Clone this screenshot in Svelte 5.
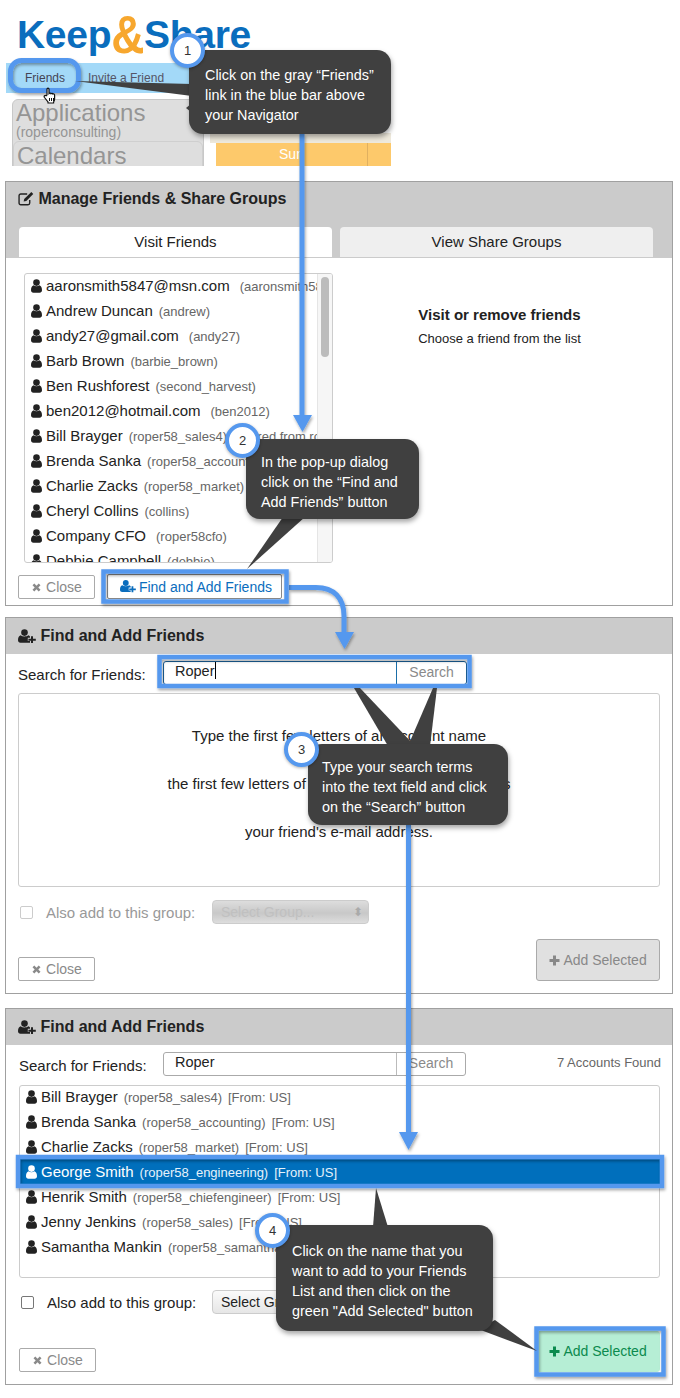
<script>
  const friends = [
    ['aaronsmith5847@msn.com', '(aaronsmith5847)', 10],
    ['Andrew Duncan', '(andrew)', 6],
    ['andy27@gmail.com', '(andy27)', 10],
    ['Barb Brown', '(barbie_brown)', 6],
    ['Ben Rushforest', '(second_harvest)', 6],
    ['ben2012@hotmail.com', '(ben2012)', 10],
    ['Bill Brayger', '(roper58_sales4) [Shared from roper58]', 6],
    ['Brenda Sanka', '(roper58_accounting)', 6],
    ['Charlie Zacks', '(roper58_market)', 6],
    ['Cheryl Collins', '(collins)', 6],
    ['Company CFO', '(roper58cfo)', 10],
    ['Debbie Campbell', '(debbie)', 6]
  ];
  const results = [
    ['Bill Brayger', '(roper58_sales4)'],
    ['Brenda Sanka', '(roper58_accounting)'],
    ['Charlie Zacks', '(roper58_market)'],
    ['George Smith', '(roper58_engineering)'],
    ['Henrik Smith', '(roper58_chiefengineer)'],
    ['Jenny Jenkins', '(roper58_sales)'],
    ['Samantha Mankin', '(roper58_samantha)']
  ];
  const callouts = [
    { n: 1, cls: 'c1', lines: ['Click on the gray “Friends”', 'link in the blue bar above', 'your Navigator'] },
    { n: 2, cls: 'c2', lines: ['In the pop-up dialog', 'click on the “Find and', 'Add Friends” button'] },
    { n: 3, cls: 'c3', lines: ['Type your search terms', 'into the text field and click', 'on the “Search” button'] },
    { n: 4, cls: 'c4', lines: ['Click on the name that you', 'want to add to your Friends', 'List and then click on the', 'green "Add Selected" button'] }
  ];
</script>

{#snippet user()}
  <svg class="ico user" viewBox="0 0 11 14"><circle cx="5.5" cy="3.6" r="3.3" fill="currentColor"/><path d="M0 11.2C0 8.6.8 6.8 2.6 6.2c.8.7 1.8 1.1 2.9 1.1s2.1-.4 2.9-1.1c1.8.6 2.6 2.4 2.6 5 0 1.6-1 2.5-2.4 2.5H2.4C1 13.7 0 12.8 0 11.2z" fill="currentColor"/></svg>
{/snippet}
{#snippet userPlus()}
  <svg class="ico plus-user" viewBox="0 0 18 14"><circle cx="6.5" cy="3.6" r="3.3" fill="currentColor"/><path d="M0 11.2C0 8.6.8 6.8 2.6 6.2c1 .8 2.3 1.2 3.9 1.2s2.900-.4 3.900-1.200c.7.200 1.200.7 1.600 1.200v1.300h-2.200v3.400H12V13.700H2.400C1 13.700 0 12.800 0 11.200z" fill="currentColor"/><path d="M13 7.200h2v2.600h2.800v2H15v2.200h-2v-2.200h-2.600v-2H13z" fill="currentColor"/></svg>
{/snippet}
{#snippet cross()}
  <svg class="ico x" viewBox="0 0 11 11"><path d="M1.500 3.300 3.300 1.500 5.500 3.700 7.700 1.500 9.500 3.300 7.300 5.500 9.500 7.700 7.700 9.500 5.500 7.300 3.300 9.500 1.500 7.700 3.700 5.500z" fill="currentColor"/></svg>
{/snippet}
{#snippet plus()}
  <svg class="ico x" viewBox="0 0 11 11"><path d="M4 .5h3V4h3.500v3H7v3.500H4V7H.5V4H4z" fill="currentColor"/></svg>
{/snippet}

<div class="page">
  <header class="top">
    <div class="logo">Keep<span>&amp;</span>Share</div>
    <div class="bluebar"><span class="tab-friends">Friends</span><span class="invite">Invite a Friend</span></div>
    <div class="nav">
      <div class="apps">
        <div class="apps-a">
          <div class="big">Applications</div>
          <div class="small">(roperconsulting)</div>
        </div>
        <div class="apps-b"><div class="big">Calendars</div></div>
      </div>
      <div class="cal">
        <div class="cal-beige"></div>
        <div class="cal-head"><span class="sun">Sun</span><span class="mon"></span></div>
      </div>
    </div>
  </header>

  <section class="panel p1">
    <div class="phead tall">
      <h2>
        <svg class="ico pencil" viewBox="0 0 15 14"><path d="M11 8.500v2.700c0 .9-.7 1.600-1.600 1.600H2.600c-.9 0-1.600-.7-1.600-1.600V4.400c0-.9.7-1.600 1.600-1.600h6" fill="none" stroke="currentColor" stroke-width="1.300"/><path d="M12.500 1 14.300 2.800 7.800 9.300 5.300 9.800 5.800 7.400z" fill="currentColor"/></svg>
        Manage Friends &amp; Share Groups
      </h2>
      <div class="tabs">
        <div class="tab on">Visit Friends</div>
        <div class="tab">View Share Groups</div>
      </div>
    </div>
    <div class="p1-body">
      <div class="flist">
        <div class="frows">
          {#each friends as f}
            <div class="frow">{@render user()}<span class="nm">{f[0]}</span><span class="sub" style:margin-left="{f[2]}px">{f[1]}</span></div>
          {/each}
        </div>
        <div class="track"><div class="thumb"></div></div>
      </div>
      <div class="visit">
        <strong>Visit or remove friends</strong>
        <span>Choose a friend from the list</span>
      </div>
    </div>
    <div class="p1-foot">
      <button class="btn close">{@render cross()} Close</button>
      <button class="btn find">{@render userPlus()} Find and Add Friends</button>
    </div>
  </section>

  <section class="panel p2">
    <div class="phead"><h2>{@render userPlus()} Find and Add Friends</h2></div>
    <div class="srow">
      <span class="slabel">Search for Friends:</span>
      <div class="sgroup focus">
        <div class="sinput">Roper<i class="caret"></i></div>
        <div class="sbtn">Search</div>
      </div>
    </div>
    <div class="hint">
      <p>Type the first few letters of an account name</p>
      <p>the first few letters of your friend's first &amp; last names</p>
      <p>your friend's e-mail address.</p>
    </div>
    <div class="grouprow faded">
      <span class="cb"></span><span class="glabel">Also add to this group:</span>
      <div class="gsel disabled"><span>Select Group...</span><span class="updown">⬍</span></div>
    </div>
    <div class="actions low">
      <button class="btn close">{@render cross()} Close</button>
      <button class="btn add">{@render plus()} Add Selected</button>
    </div>
  </section>

  <section class="panel p3">
    <div class="phead"><h2>{@render userPlus()} Find and Add Friends</h2></div>
    <div class="srow">
      <span class="slabel">Search for Friends:</span>
      <div class="sgroup">
        <div class="sinput">Roper</div>
        <div class="sbtn">Search</div>
      </div>
      <span class="found">7 Accounts Found</span>
    </div>
    <div class="rlist">
      {#each results as r, i}
        <div class="rrow" class:sel={i === 3}>{@render user()}<span class="nm">{r[0]}</span><span class="sub r-sub">{r[1]}</span><span class="sub r-sub">[From: US]</span></div>
      {/each}
    </div>
    <div class="grouprow">
      <span class="cb"></span><span class="glabel">Also add to this group:</span>
      <div class="gsel"><span>Select Group...</span></div>
    </div>
    <div class="actions">
      <button class="btn close">{@render cross()} Close</button>
      <button class="btn add green">{@render plus()} Add Selected</button>
    </div>
  </section>

  <!-- annotation layer drawn over the screenshots -->
  <svg class="arrows" viewBox="0 0 680 1398" width="680" height="1398">
    <defs>
      <filter id="sh" x="-20%" y="-20%" width="140%" height="140%"><feDropShadow dx="1" dy="2" stdDeviation="1.500" flood-color="#000" flood-opacity=".35"/></filter>
    </defs>
    <path d="M191 104v8l-5-4z" fill="#444"/>
    <g filter="url(#sh)">
      <g fill="none" stroke="#5598ee" stroke-width="5">
        <path d="M302 134V417"/>
        <path d="M289 587.500H316C334 587.500 344 598 344 616V635"/>
        <path d="M408.500 825V1134"/>
      </g>
      <g fill="#5598ee">
        <path d="M293 415H312L302.500 432z"/>
        <path d="M335 632H354L344.500 649z"/>
        <path d="M399 1132H418L408.500 1150z"/>
      </g>
    </g>
    <g fill="none" stroke="#5598ee" stroke-width="4.500" filter="url(#sh)">
      <rect x="10.500" y="60.500" width="68" height="30" rx="11" stroke-width="5"/>
      <rect x="103.500" y="571.500" width="183" height="30"/>
      <rect x="159.500" y="657" width="310" height="29"/>
      <rect x="18" y="1157" width="644" height="29"/>
      <rect x="536.500" y="1328.500" width="127" height="46"/>
    </g>
    <g fill="#404040">
      <path d="M75 81 192 84V96z"/>
      <path d="M283 517H305L247 569z"/>
      <path d="M354 688H360L415 746H388z"/>
      <path d="M437 688H433L408 746H430z"/>
      <path d="M376 1188 373 1227H388z"/>
      <path d="M478 1329 495 1320 537 1351z"/>
    </g>
  </svg>

  {#each callouts as c}
    <div class="callout {c.cls}">
      {#each c.lines as l}<div>{l}</div>{/each}
      <span class="badge">{c.n}</span>
    </div>
  {/each}

  <svg class="hand" viewBox="0 0 14 17" width="14" height="17"><path d="M4 8V2.200C4 .8 6 .8 6 2.200V6.500c.6-.6 1.700-.5 2 .2.600-.5 1.600-.3 1.900.4.600-.4 1.700 0 1.700 1V12c0 1.500-.6 2.200-1 3v1H5v-1L1.500 10.500C.5 9 2 7.800 3.200 8.800z" fill="#fff" stroke="#111" stroke-width="1.200"/><path d="M6.500 11v3M8.500 11v3M10.500 11v3" stroke="#111" stroke-width="1"/></svg>
</div>

<style>
  :global(body) { margin: 0; background: #fff; }
  .page {
    position: relative; width: 680px; height: 1398px; overflow: hidden; background: #fff;
    font-family: "Liberation Sans", Arial, sans-serif; color: #222; font-size: 15px;
  }
  .ico { display: inline-block; vertical-align: -1px; }
  .user { width: 11px; height: 14px; margin-right: 4px; vertical-align: -1.500px; }
  .plus-user { width: 18px; height: 14px; vertical-align: -1.500px; }
  .x { width: 11px; height: 11px; }
  .pencil { width: 16px; height: 15px; vertical-align: -1.500px; }

  /* top crop */
  .top { height: 166px; padding-left: 6px; margin-bottom: 15px; position: relative; overflow: hidden; }
  .logo { font-size: 39px; font-weight: 700; color: #0a6dbd; height: 63px; line-height: 69px; padding-left: 11px; letter-spacing: -.3px; }
  .logo span { display: inline-block; color: #f7a72e; font-size: 46px; line-height: 40px; transform: translateY(3px) scaleY(1.150); }
  .bluebar { height: 30px; width: 190px; background: #a3d9f8; display: flex; align-items: center; font-size: 12px; color: #445; }
  .tab-friends { margin-left: 19px; }
  .invite { margin-left: 23px; color: #556; }
  .nav { display: flex; margin-top: 6px; padding-left: 6px; gap: 6px; }
  .apps { width: 192px; height: 80px; background: #dedede; border: 1px solid #c8c8c8; border-radius: 6px 6px 0 0; box-sizing: border-box; color: #959595; }
  .apps-a { height: 42px; padding: 0 0 0 3px; margin-top: -1px; }
  .apps-b { border: 1px solid #cfcfcf; border-radius: 6px 6px 0 0; height: 31px; padding-left: 3px; }
  .big { font-size: 24px; line-height: 27px; }
  .small { font-size: 14px; line-height: 12px; }
  .cal { width: 181px; margin-top: 34px; }
  .cal-beige { height: 10px; background: #eee9dc; }
  .cal-head { display: flex; height: 23px; margin-left: 6px; background: #fdc96b; color: #fff; font-size: 14px; align-items: center; }
  .sun { width: 152px; text-align: center; border-right: 1px solid #e0b060; height: 100%; line-height: 23px; box-sizing: border-box; }
  .mon { flex: 1; }

  /* panels */
  .panel { margin-left: 5px; width: 668px; box-sizing: border-box; border: 1px solid #a0a0a0; background: #fff; }
  .p1 { height: 425px; }
  .p2 { height: 377px; margin-top: 11px; }
  .p3 { height: 377px; margin-top: 14px; }
  .phead { background: #cbcbcb; height: 36px; padding: 0 12px; }
  .phead.tall { height: 76px; }
  h2 { margin: 0; font-size: 16px; line-height: 36px; font-weight: 700; color: #222; }
  .tall h2 { line-height: 33px; }
  .tabs { display: flex; gap: 8px; margin: 12px 0 0 1px; }
  .tab { width: 313px; height: 30px; line-height: 30px; text-align: center; background: #efefef; border-radius: 4px 4px 0 0; font-size: 15px; color: #222; }
  .tab.on { background: #fff; }

  .p1-body { display: flex; padding: 15px 0 0 18px; }
  .flist { width: 309px; height: 290px; box-sizing: border-box; border: 1px solid #ccc; border-radius: 3px; display: flex; overflow: hidden; }
  .frows { width: 292px; overflow: hidden; flex: none; margin-top: -1px; }
  .frow { height: 25px; line-height: 25px; white-space: nowrap; padding-left: 6px; font-size: 15px; }
  .sub { font-size: 13px; color: #666; margin-left: 6px; }
  .track { flex: 1; background: #f6f6f6; border-left: 1px solid #e5e5e5; padding: 3px 3px 0; }
  .thumb { height: 80px; background: #bcbcbc; border-radius: 5px; }
  .visit { flex: 1; text-align: center; padding: 33px 6px 0 0; display: flex; flex-direction: column; gap: 8px; }
  .visit strong { font-size: 15px; line-height: 17px; }
  .visit span { font-size: 13px; line-height: 15px; }

  .btn { font: inherit; box-sizing: border-box; height: 25px; border: 1px solid #aaa; border-radius: 2px; background: #fff; color: #8a8a8a; padding: 0; font-size: 14px; }
  .close { width: 77px; height: 24px; }
  .p1-foot { display: flex; gap: 12px; margin: 11px 0 0 12px; align-items: flex-start; }
  .p1-foot .close { margin-top: 1px; }
  .find { width: 175px; color: #0a6dbd; border-color: #888; }
  .find :global(.plus-user) { width: 16px; margin-left: 3px; margin-right: -1px; }

  .srow { display: flex; align-items: center; height: 38px; padding-left: 12px; position: relative; }
  .slabel { font-size: 15px; width: 145px; margin-top: 3px; flex: none; }
  .sgroup { display: flex; height: 24px; width: 303px; box-sizing: border-box; border: 1px solid #aaa; border-radius: 3px; margin-top: -1px; }
  .sgroup.focus { border-color: #1a5e96; width: 304px; }
  .sinput { width: 233px; box-sizing: border-box; padding-left: 11px; line-height: 19px; font-size: 14.500px; border-right: 1px solid #bbb; }
  .focus .sinput { border-right-color: #1a6ea8; }
  .caret { display: inline-block; width: 1px; height: 17px; background: #000; vertical-align: -3px; }
  .sbtn { flex: 1; text-align: center; line-height: 21px; color: #8a8a8a; font-size: 14px; }
  .found { position: absolute; right: 11px; top: 8px; font-size: 13px; color: #666; line-height: 20px; }

  .hint { margin: 1px 12px 0; height: 194px; box-sizing: border-box; border: 1px solid #ccc; border-radius: 3px; padding-top: 33px; text-align: center; font-size: 15px; }
  .hint p { margin: 0 0 31px; line-height: 17px; }

  .grouprow { display: flex; align-items: center; padding-left: 14px; height: 24px; margin-top: 13px; font-size: 15px; }
  .cb { width: 11px; height: 11px; border: 1px solid #777; border-radius: 2px; flex: none; background: #fff; }
  .glabel { margin-left: 13px; width: 166px; flex: none; color: #222; }
  .gsel { width: 157px; height: 24px; box-sizing: border-box; border: 1px solid #ccc; border-radius: 4px; background: linear-gradient(#fafafa, #e6e6e6); padding-left: 8px; line-height: 22px; display: flex; justify-content: space-between; font-size: 14px; }
  .faded .cb { border-color: #ccc; }
  .faded .glabel { color: #999; }
  .disabled { background: linear-gradient(#ddd, #c8c8c8 55%, #ddd); color: #c0c0c0; padding-right: 5px; }
  .updown { font-size: 12px; color: #aaa; }

  .actions { display: flex; justify-content: space-between; align-items: flex-end; margin: 15px 12px 0; }
  .add { width: 124px; height: 42px; background: #e0e0e0; border-color: #aaa; border-radius: 3px; color: #888; }
  .green { background: #b6eed5; color: #0b8a4e; border-color: #b6eed5; height: 41px; padding-bottom: 2px; }

  .rlist { margin: 2px 12px 0 13px; height: 193px; box-sizing: border-box; border: 1px solid #ccc; border-radius: 3px; }
  .p3 .srow { padding-left: 13px; }
  .p3 .slabel { width: 144px; }
  .rrow { height: 25px; line-height: 25px; padding-left: 6px; white-space: nowrap; font-size: 15px; }
  .rrow:first-child { margin-top: -2px; }
  .r-sub { margin-left: 6px; }
  .rrow.sel { background: #006fbc; color: #fff; margin: 0 -3px; padding-left: 9px; }
  .rrow.sel .sub { color: #e6f2fb; }
  .p3 .grouprow { margin-top: 12px; padding-left: 15px; }
  .p3 .glabel { width: 165px; }
  .p3 .actions { margin-top: 17px; margin-left: 13px; }

  /* annotations */
  .arrows { position: absolute; left: 0; top: 0; pointer-events: none; }
  .callout { position: absolute; background: #404040; color: #fff; border-radius: 14px; box-shadow: 1px 3px 5px rgba(0,0,0,.35); font-size: 14.400px; line-height: 20px; box-sizing: border-box; }
  .c1 { left: 189px; top: 50px; width: 202px; height: 84px; padding: 15px 0 0 16px; }
  .c2 { left: 246px; top: 439px; width: 173px; height: 80px; padding: 13px 0 0 15px; }
  .c3 { left: 308px; top: 744px; width: 200px; height: 81px; padding: 13px 0 0 14px; }
  .c4 { left: 276px; top: 1225px; width: 217px; height: 106px; padding: 16px 0 0 16px; }
  .badge { position: absolute; width: 27px; height: 27px; box-sizing: content-box; border: 4px solid #5598ee; border-radius: 50%; background: #fff; color: #333; font-size: 13px; line-height: 27px; text-align: center; box-shadow: 0 1px 3px rgba(0,0,0,.3); }
  .c1 .badge { left: -19px; top: -17px; }
  .c2 .badge { left: -21px; top: -16px; }
  .c3 .badge { left: -24px; top: -12px; }
  .c4 .badge { left: -21px; top: -12px; }
  .hand { position: absolute; left: 43px; top: 87px; }
</style>
